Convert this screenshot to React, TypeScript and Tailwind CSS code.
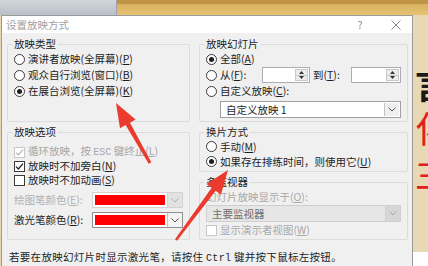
import type { ReactNode } from "react";

// Small access-key suffix like "(P)" with the letter underlined
function Key({ k }: { k: string }) {
  return (
    <>
      (<span className="underline underline-offset-1">{k}</span>)
    </>
  );
}

function Radio({ checked = false, children }: { checked?: boolean; children: ReactNode }) {
  return (
    <div className="flex items-center gap-[3px] h-[16px]">
      <span className="w-[11px] h-[11px] rounded-full border border-[#3a3a3a] bg-white flex items-center justify-center shrink-0">
        {checked && <span className="w-[5px] h-[5px] rounded-full bg-[#1e1e1e]" />}
      </span>
      <span className="whitespace-nowrap">{children}</span>
    </div>
  );
}

function Check({ checked = false, disabled = false }: { checked?: boolean; disabled?: boolean }) {
  return (
    <span
      className={`w-[11px] h-[11px] border bg-white flex items-center justify-center shrink-0 ${
        disabled ? "border-[#c8c8c8]" : "border-[#3a3a3a]"
      }`}
    >
      {checked && (
        <svg width="9" height="9" viewBox="0 0 9 9">
          <path d="M1 4.6 3.4 7 8 1.6" fill="none" stroke={disabled ? "#b8b8b8" : "#1e1e1e"} strokeWidth="1.3" />
        </svg>
      )}
    </span>
  );
}

function Chevron({ color = "#555" }: { color?: string }) {
  return (
    <svg width="8" height="5" viewBox="0 0 8 5">
      <path d="M0.5 0.5 4 4 7.5 0.5" fill="none" stroke={color} strokeWidth="1" />
    </svg>
  );
}

function Group({ title, className = "", children }: { title: ReactNode; className?: string; children: ReactNode }) {
  return (
    <fieldset className={`border border-[#dcdcdc] rounded-[2px] px-[6px] ${className}`}>
      <legend className="px-[2px] -ml-[2px] leading-[14px]">{title}</legend>
      {children}
    </fieldset>
  );
}

function Spin({ className = "" }: { className?: string }) {
  return (
    <div className={`flex h-[16px] border border-[#abadb3] bg-white ${className}`}>
      <span className="flex-1" />
      <span className="w-[13px] my-[1px] mr-[1px] flex flex-col border border-[#c9c9c9] bg-[#ececec]">
        <span className="flex-1 flex items-center justify-center">
          <svg width="5" height="3" viewBox="0 0 5 3">
            <path d="M0 3 2.5 0 5 3z" fill="#333" />
          </svg>
        </span>
        <span className="flex-1 flex items-center justify-center border-t border-[#c9c9c9]">
          <svg width="5" height="3" viewBox="0 0 5 3">
            <path d="M0 0 2.5 3 5 0z" fill="#333" />
          </svg>
        </span>
      </span>
    </div>
  );
}

function Select({ value, disabled = false, className = "" }: { value: string; disabled?: boolean; className?: string }) {
  return (
    <div
      className={`flex h-[17px] border ${
        disabled ? "border-[#cfcfcf] bg-[#e6e6e6] text-[#6e6e6e]" : "border-[#a0a0a0] bg-white"
      } ${className}`}
    >
      <span className="flex-1 px-[5px] leading-[15px] whitespace-nowrap">{value}</span>
      <span
        className={`w-[15px] flex items-center justify-center border-l ${
          disabled ? "bg-[#d6d6d6] border-[#cfcfcf]" : "bg-[#f0f0f0] border-[#c4c4c4] m-[1px]"
        }`}
      >
        <Chevron color={disabled ? "#a8a8a8" : "#555"} />
      </span>
    </div>
  );
}

function ColorBox({ disabled = false }: { disabled?: boolean }) {
  return (
    <div className={`flex w-[91px] h-[16px] border bg-white ${disabled ? "border-[#d2d2d2]" : "border-[#8e8e8e]"}`}>
      <div className="flex-1 p-[2px]">
        <div className="h-full bg-[#ff0000]" />
      </div>
      <div
        className={`w-[15px] flex items-center justify-center border-l ${
          disabled ? "bg-[#e2e2e2] border-[#d2d2d2]" : "bg-[#f4f4f4] border-[#c4c4c4]"
        }`}
      >
        <Chevron color={disabled ? "#b0b0b0" : "#555"} />
      </div>
    </div>
  );
}

export default function App() {
  return (
    <div className="relative w-[428px] h-[266px] overflow-hidden bg-[#e7d7b3] text-[#1e1e1e] text-[10.5px] leading-[14px] font-['Noto_Sans_CJK_SC',sans-serif]">
      {/* window behind the dialog */}
      <div className="flex h-[15px]">
        <div className="w-[117px] bg-gradient-to-b from-[#d3d6dc] to-[#babfc8] border-r border-[#9ea3ab]" />
        <div className="flex-1 flex flex-col">
          <div className="h-[4px] bg-[#bf9442]" />
          <div className="flex-1 bg-gradient-to-b from-[#d8b061] to-[#e6c373]" />
        </div>
      </div>

      <div className="flex h-[251px]">
        {/* dialog */}
        <div className="ml-[1px] w-[412px] flex flex-col bg-[#f0f0f0] border-x border-t border-[#9a9a9a]">
          <div className="h-[21px] bg-white flex items-center pl-[4px] text-[#a0a0a0]">
            <span>设置放映方式</span>
            <span className="ml-auto w-[12px] text-center text-[#8a8a8a]">?</span>
            <span className="ml-[24px] mr-[10px] w-[12px] flex justify-center">
              <svg width="10" height="10" viewBox="0 0 10 10">
                <path d="M0.5 0.5 9.5 9.5M9.5 0.5 0.5 9.5" stroke="#8a8a8a" strokeWidth="1" />
              </svg>
            </span>
          </div>

          <div className="pl-[5px] pr-[4px] pt-[4px]">
            <div className="grid grid-cols-[183px_209px] gap-x-[9px] gap-y-[3px]">
              <Group title="放映类型">
                <Radio>
                  演讲者放映(全屏幕)<Key k="P" />
                </Radio>
                <Radio>
                  观众自行浏览(窗口)<Key k="B" />
                </Radio>
                <Radio checked>
                  在展台浏览(全屏幕)<Key k="K" />
                </Radio>
              </Group>

              <Group title="放映幻灯片" className="pb-[3px]">
                <Radio checked>
                  全部<Key k="A" />
                </Radio>
                <div className="flex items-center h-[16px]">
                  <Radio>
                    <span className="inline-block w-[42px]">
                      从<Key k="F" />:
                    </span>
                  </Radio>
                  <Spin className="w-[48px]" />
                  <span className="ml-[3px] w-[38px] whitespace-nowrap">
                    到<Key k="T" />:
                  </span>
                  <Spin className="w-[50px]" />
                </div>
                <Radio>
                  自定义放映<Key k="C" />:
                </Radio>
                <Select value="自定义放映 1" className="mt-[2px] ml-[14px]" />
              </Group>

              <Group title="放映选项" className="pb-[10px]">
                <div className="mt-[6px] flex items-center gap-[3px] h-[14px] text-[#a6a6a6]">
                  <Check checked disabled />
                  <span className="whitespace-nowrap">
                    循环放映，按 <span className="font-['Liberation_Mono',monospace] text-[10px]">ESC</span> 键终止
                    <Key k="L" />
                  </span>
                </div>
                <div className="flex items-center gap-[3px] h-[14px]">
                  <Check checked />
                  <span>
                    放映时不加旁白<Key k="N" />
                  </span>
                </div>
                <div className="flex items-center gap-[3px] h-[14px]">
                  <Check />
                  <span>
                    放映时不加动画<Key k="S" />
                  </span>
                </div>
                <div className="mt-[5px] flex items-center h-[16px]">
                  <span className="w-[78px] text-[#b0b0b0] whitespace-nowrap">
                    绘图笔颜色<Key k="E" />:
                  </span>
                  <ColorBox disabled />
                </div>
                <div className="mt-[4px] flex items-center h-[16px]">
                  <span className="w-[78px] whitespace-nowrap">
                    激光笔颜色<Key k="R" />:
                  </span>
                  <ColorBox />
                </div>
              </Group>

              <div className="flex flex-col gap-[3px]">
                <Group title="换片方式" className="pb-[2px]">
                  <div className="[&>div]:h-[15px]">
                    <Radio>
                      手动<Key k="M" />
                    </Radio>
                    <Radio checked>
                      如果存在排练时间，则使用它<Key k="U" />
                    </Radio>
                  </div>
                </Group>
                <Group title="多监视器" className="pb-[2px] flex-1">
                  <div className="h-[16px] flex items-center text-[#a8a8a8] whitespace-nowrap">
                    幻灯片放映显示于<Key k="O" />:
                  </div>
                  <Select value="主要监视器" disabled className="h-[16px]" />
                  <div className="mt-[1px] flex items-center gap-[3px] h-[14px] text-[#a8a8a8]">
                    <Check disabled />
                    <span>
                      显示演示者视图<Key k="W" />
                    </span>
                  </div>
                </Group>
              </div>
            </div>

            <p className="mt-[10px] whitespace-nowrap pl-[2px] tracking-[0.3px]">
              若要在放映幻灯片时显示激光笔，请按住 <span className="font-['Liberation_Mono',monospace] text-[10px]">Ctrl</span>{" "}
              键并按下鼠标左按钮。
            </p>
          </div>
        </div>

        {/* slide peeking out on the right */}
        <div className="flex-1 flex flex-col overflow-hidden">
          <div className="flex-1 bg-[#e8d8b6] pl-[2px] pt-[46px] text-[36px] leading-[44px] whitespace-nowrap">
            <div className="text-[#1a1a1a] font-bold">言</div>
            <div className="text-[#e02020]">化</div>
            <div className="text-[#e02020]">主</div>
          </div>
          <div className="h-[14px] bg-white" />
        </div>
      </div>

      {/* red annotation arrows */}
      <svg className="absolute inset-0 pointer-events-none" width="428" height="266" viewBox="0 0 428 266">
        <polygon
          points="116,103 135.6,119.5 130,122.7 151.3,162.3 148.7,163.7 125.6,125.1 120,128.3"
          fill="#ea3b2e"
        />
        <polygon
          points="228,170 220.9,194.7 215.7,190.8 177,240.8 175,239.2 211.7,187.8 206.5,183.9"
          fill="#ea3b2e"
        />
      </svg>
    </div>
  );
}
